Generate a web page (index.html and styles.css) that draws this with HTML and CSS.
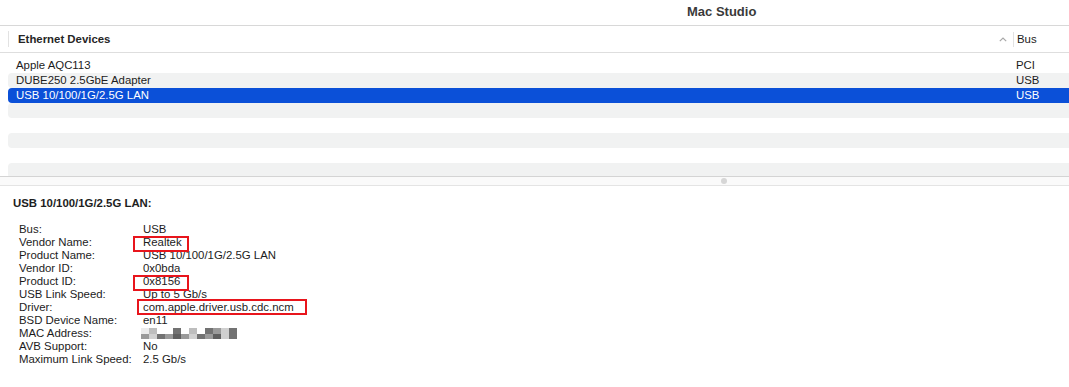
FILE: index.html
```html
<!DOCTYPE html>
<html lang="en">

<head>
  <meta charset="UTF-8">
  <meta name="viewport" content="width=device-width, initial-scale=1.0">
  <title>System Information</title>
  <link rel="stylesheet" href="styles.css">
</head>

<body>
  <div class="titlebar">Mac Studio</div>

  <div class="table-head">
    <div class="head-name">Ethernet Devices</div>
    <div class="head-sort">
      <svg width="8" height="5" viewBox="0 0 8 5"><polyline points="0.8,4.2 4,1 7.2,4.2" fill="none" stroke="#a8a8a8" stroke-width="1.2"/></svg>
    </div>
    <div class="head-bus">Bus</div>
  </div>

  <div class="rows">
    <div class="row"><span>Apple AQC113</span><span>PCI</span></div>
    <div class="row alt"><span>DUBE250 2.5GbE Adapter</span><span>USB</span></div>
    <div class="row selected"><span>USB 10/100/1G/2.5G LAN</span><span>USB</span></div>
    <div class="row alt"></div>
    <div class="row"></div>
    <div class="row alt"></div>
    <div class="row"></div>
    <div class="row alt"></div>
  </div>

  <div class="splitter"><span class="grip"></span></div>

  <div class="details">
    <h3 class="details-title">USB 10/100/1G/2.5G LAN:</h3>
    <div class="props">
      <span>Bus:</span><span>USB</span>
      <span>Vendor Name:</span><span><span class="mark mark-short">Realtek</span></span>
      <span>Product Name:</span><span>USB 10/100/1G/2.5G LAN</span>
      <span>Vendor ID:</span><span>0x0bda</span>
      <span>Product ID:</span><span><span class="mark mark-short">0x8156</span></span>
      <span>USB Link Speed:</span><span>Up to 5 Gb/s</span>
      <span>Driver:</span><span><span class="mark mark-long">com.apple.driver.usb.cdc.ncm</span></span>
      <span>BSD Device Name:</span><span>en11</span>
      <span>MAC Address:</span>
      <span class="mac">
        <i class="p1"></i><i class="p3"></i><i class="p0"></i><i class="p0"></i><i class="p5"></i><i class="p0"></i><i class="p3"></i><i class="p0"></i><i class="p5"></i><i class="p4"></i><i class="p2"></i><i class="p5"></i>
        <i class="p4"></i><i class="p2"></i><i class="p5"></i><i class="p4"></i><i class="p6"></i><i class="p4"></i><i class="p2"></i><i class="p5"></i><i class="p4"></i><i class="p6"></i><i class="p2"></i><i class="p5"></i>
      </span>
      <span>AVB Support:</span><span>No</span>
      <span>Maximum Link Speed:</span><span>2.5 Gb/s</span>
    </div>
  </div>
</body>

</html>
```

FILE: styles.css
```css
/* System Information window */
body {
  font-family: "Liberation Sans", Arial, sans-serif;
  font-size: 11.4px;
  color: #1c1c1c;
  background-color: #fff;
  margin: 0;
  padding: 0;
}

.titlebar {
  height: 25px;
  line-height: 23px;
  padding-left: 687px;
  font-size: 13px;
  font-weight: bold;
  color: #3a3a3a;
  border-bottom: 1px solid #d8d8d8;
}

.table-head {
  display: flex;
  align-items: center;
  height: 26px;
  border-bottom: 1px solid #dedede;
}

.head-name {
  flex: 1;
  margin-left: 8px;
  padding-left: 9px;
  font-weight: bold;
  color: #262626;
  border-left: 1px solid #e2e2e2;
  line-height: 16px;
}

.head-sort {
  display: flex;
  align-items: center;
  width: 14px;
  height: 14px;
}

.head-bus {
  width: 52px;
  padding-left: 3px;
  border-left: 1px solid #e2e2e2;
  line-height: 15px;
}

.rows {
  height: 123px;
  padding-top: 5px;
  box-sizing: border-box;
  overflow: hidden;
}

.row {
  display: grid;
  grid-template-columns: 1fr 53px;
  height: 15px;
  line-height: 15px;
  margin-left: 8px;
  padding-left: 8px;
  border-radius: 4px 0 0 4px;
}

.row.alt {
  background-color: #f1f2f2;
}

.row.selected {
  background-color: #0b50d8;
  color: #fff;
}

.splitter {
  display: flex;
  justify-content: center;
  align-items: center;
  height: 8px;
  background-color: #fafafa;
  border-top: 1px solid #d4d4d4;
  border-bottom: 1px solid #e4e4e4;
  padding-left: 378px;
}

.grip {
  width: 6px;
  height: 6px;
  border-radius: 50%;
  background-color: #d6d6d6;
}

.details {
  padding: 11px 13px 0;
}

.details-title {
  margin: 0 0 13px;
  font-size: 11.4px;
  line-height: 13px;
  color: #1e1e1e;
}

.props {
  display: grid;
  grid-template-columns: 124px auto;
  line-height: 13px;
  padding-left: 6px;
}

.mark {
  position: relative;
}

.mark::after {
  content: '';
  position: absolute;
  box-sizing: border-box;
  border: 2px solid #e8151c;
}

.mark-short::after {
  left: -10px;
  top: 0;
  width: 56px;
  height: 16px;
}

.mark-long::after {
  left: -6px;
  top: -2px;
  width: 170px;
  height: 16px;
}

.mac {
  display: grid;
  grid-template-columns: repeat(12, 8px);
  grid-template-rows: 6px 5px;
  align-self: center;
  margin-left: -2px;
}

.mac i { display: block; }
.mac .p0 { background-color: #fff; }
.mac .p1 { background-color: #ececec; }
.mac .p2 { background-color: #d0d0d0; }
.mac .p3 { background-color: #bdbdbd; }
.mac .p4 { background-color: #9a9a9a; }
.mac .p5 { background-color: #727272; }
.mac .p6 { background-color: #5f5f5f; }
```
